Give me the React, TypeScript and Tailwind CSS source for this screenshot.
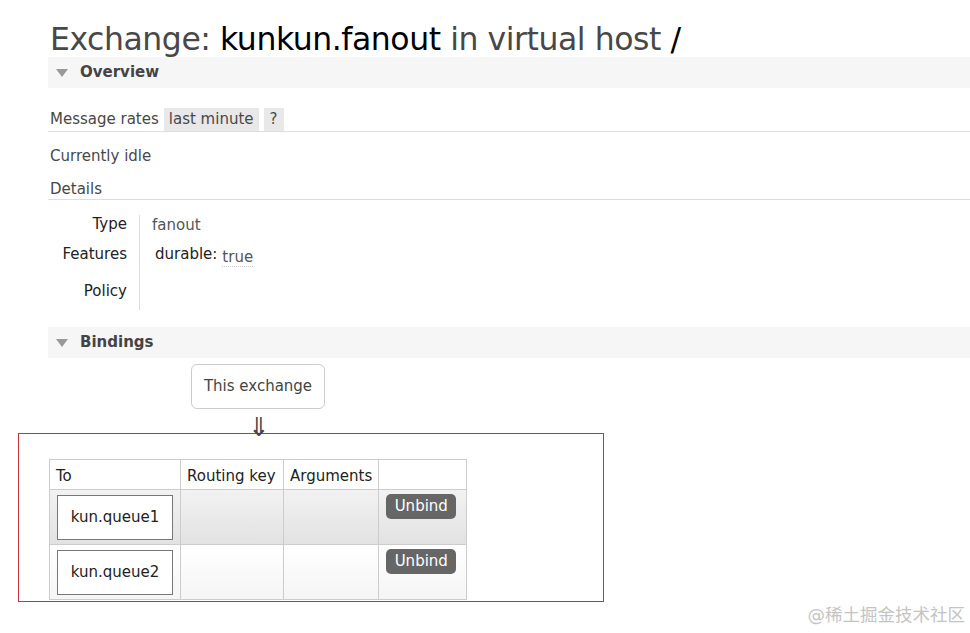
const font = { fontFamily: '"DejaVu Sans", Verdana, sans-serif' };

function SectionHeader({ title }: { title: string }) {
  return (
    <div className="flex items-center h-[31px] bg-[#f6f6f6] ml-[-2px] pl-[8px]">
      <span className="w-0 h-0 border-l-[6px] border-r-[6px] border-t-[8px] border-l-transparent border-r-transparent border-t-[#999] mr-[12px]" />
      <span className="text-[15px] font-bold text-[#444]">{title}</span>
    </div>
  );
}

export default function App() {
  return (
    <div className="relative w-[970px] h-[633px] bg-white overflow-hidden text-[#484848]" style={font}>
      <div className="pl-[50px] pt-[18px]">
        {/* ── Title ── */}
        <h1 className="text-[31.5px] leading-[40px] tracking-[-0.45px] text-[#484848] whitespace-nowrap mt-[1px] mb-[-2px]">
          Exchange: <span className="text-black">kunkun.fanout</span> in virtual host <span className="text-black">/</span>
        </h1>

        <SectionHeader title="Overview" />

        {/* Message rates */}
        <div className="mt-[20px] flex items-center h-[24px] border-b border-[#ddd] ml-[-2px] pl-[2px] pb-px text-[15px]">
          <span>Message rates</span>
          <span className="ml-[5px] bg-[#e8e8e8] px-[5px] h-[23px] flex items-center">last minute</span>
          <span className="ml-[5px] bg-[#e8e8e8] px-[6px] h-[23px] flex items-center">?</span>
        </div>

        <p className="mt-[14px] text-[15px] leading-[20px]">Currently idle</p>
        <p className="mt-[13px] text-[15px] leading-[20px] border-b border-[#ddd] ml-[-2px] pl-[2px]">Details</p>

        {/* Details table */}
        <div className="flex mt-[15px] h-[95px]">
          <div className="w-[77px] text-right text-[15px] text-[#222] leading-[20px]">
            <div className="mt-[-1px]">Type</div>
            <div className="mt-[10px]">Features</div>
            <div className="mt-[17px]">Policy</div>
          </div>
          <div className="ml-[12px] w-px bg-[#ddd]" />
          <div className="pl-[12px] text-[15px] leading-[20px]">
            <div className="mt-[0px] text-[#555]">fanout</div>
            <div className="mt-[9px] flex items-end">
              <span className="text-[#222] ml-[3px]">durable:</span>
              <span className="ml-[5px] text-[#555] border-b border-dotted border-[#ccc] leading-[18px] mb-[-3px]">true</span>
            </div>
          </div>
        </div>

        <div className="mt-[17px]">
          <SectionHeader title="Bindings" />
        </div>

        {/* This exchange */}
        <div className="ml-[141px] mt-[6px] w-[134px] h-[45px] border border-[#ccc] rounded-[6px] flex items-center justify-center text-[15px] text-[#444]">
          This exchange
        </div>
        <div className="ml-[198px] mt-[7px] text-[26px] leading-[22px] text-[#444] relative z-10">⇓</div>
      </div>

      {/* Bindings table (annotated) */}
      <div className="ml-[18px] mt-[-5px] w-[586px] h-[169px] border border-[#c8323c] pl-[30px] pt-[25px]">
        <table className="border-collapse text-[15px] text-[#222]">
          <thead>
            <tr className="h-[30px] bg-white">
              <th className="w-[130px] border border-[#ccc] font-normal text-left px-[6px] pt-[3px]">To</th>
              <th className="w-[103px] border border-[#ccc] font-normal text-left px-[6px] pt-[3px]">Routing key</th>
              <th className="w-[95px] border border-[#ccc] font-normal text-left px-[6px] pt-[3px]">Arguments</th>
              <th className="w-[88px] border border-[#ccc]" />
            </tr>
          </thead>
          <tbody>
            {["kun.queue1", "kun.queue2"].map((q, i) => (
              <tr
                key={q}
                className={`h-[55px] ${i === 0 ? "bg-gradient-to-b from-[#f2f2f2] to-[#e2e2e2]" : "bg-gradient-to-b from-white to-[#f5f5f5]"}`}
              >
                <td className="border border-[#ccc] px-[7px] py-[3px]">
                  <div className="w-[116px] h-[45px] border border-[#777] bg-white flex items-center justify-center">{q}</div>
                </td>
                <td className="border border-[#ccc]" />
                <td className="border border-[#ccc]" />
                <td className="border border-[#ccc] align-top px-[7px] pt-[4px]">
                  <div className="w-[70px] h-[25px] rounded-[5px] bg-[#666] text-white flex items-center justify-center">Unbind</div>
                </td>
              </tr>
            ))}
          </tbody>
        </table>
      </div>

      <div
        className="absolute right-[5px] bottom-[5px] text-[17.5px] text-[#c4c4c4]"
        style={{ fontFamily: '"DejaVu Sans", "Noto Sans CJK SC", sans-serif' }}
      >
        @稀土掘金技术社区
      </div>
    </div>
  );
}
